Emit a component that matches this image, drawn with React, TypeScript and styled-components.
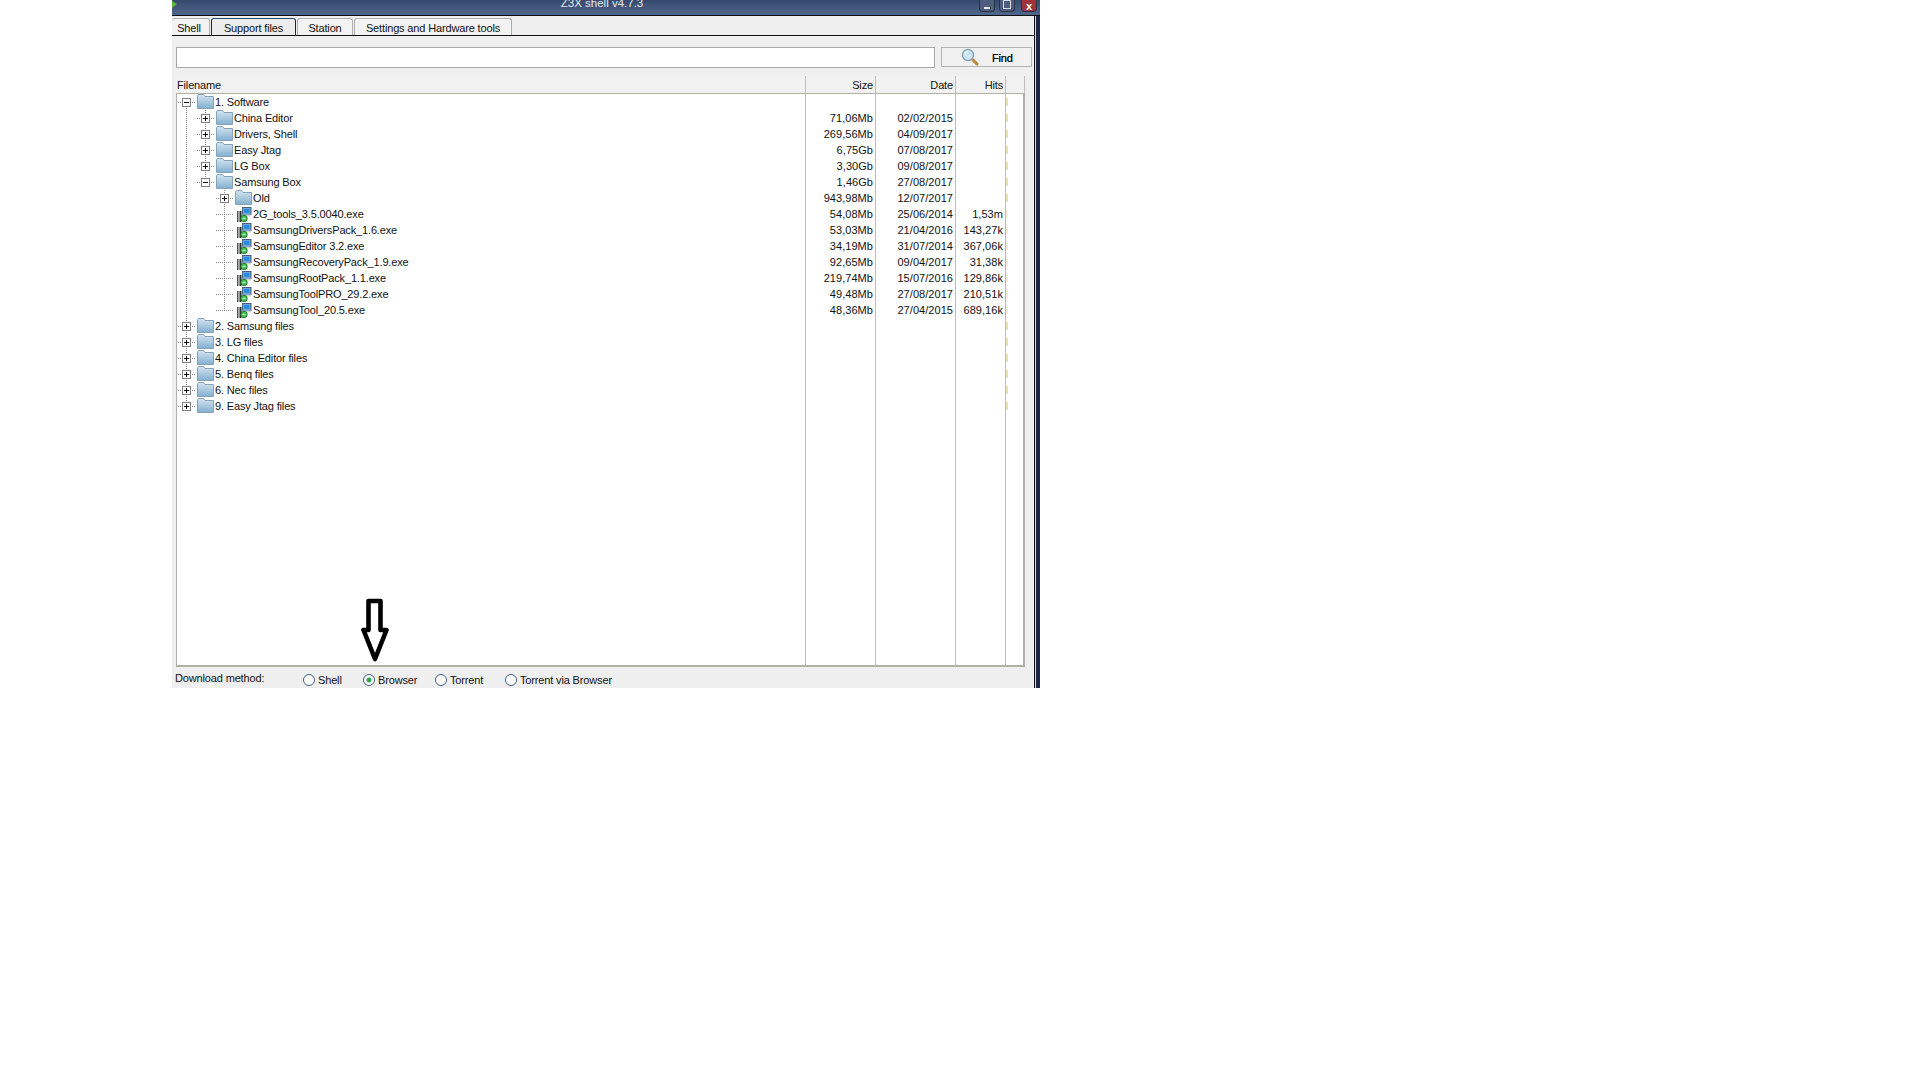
import React from "react";
import styled, { createGlobalStyle, css } from "styled-components";

type SlotKind = "none" | "line" | "tee" | "end" | "first";

interface TreeRow {
  name: string;
  kind: "open" | "closed" | "file";
  guides: SlotKind[];
  slot: SlotKind;
  size?: string;
  date?: string;
  hits?: string;
}

const rows: TreeRow[] = [
  { name: "1. Software", kind: "open", guides: [], slot: "first" },
  { name: "China Editor", kind: "closed", guides: ["line"], slot: "tee", size: "71,06Mb", date: "02/02/2015" },
  { name: "Drivers, Shell", kind: "closed", guides: ["line"], slot: "tee", size: "269,56Mb", date: "04/09/2017" },
  { name: "Easy Jtag", kind: "closed", guides: ["line"], slot: "tee", size: "6,75Gb", date: "07/08/2017" },
  { name: "LG Box", kind: "closed", guides: ["line"], slot: "tee", size: "3,30Gb", date: "09/08/2017" },
  { name: "Samsung Box", kind: "open", guides: ["line"], slot: "end", size: "1,46Gb", date: "27/08/2017" },
  { name: "Old", kind: "closed", guides: ["line", "none"], slot: "tee", size: "943,98Mb", date: "12/07/2017" },
  { name: "2G_tools_3.5.0040.exe", kind: "file", guides: ["line", "none"], slot: "tee", size: "54,08Mb", date: "25/06/2014", hits: "1,53m" },
  { name: "SamsungDriversPack_1.6.exe", kind: "file", guides: ["line", "none"], slot: "tee", size: "53,03Mb", date: "21/04/2016", hits: "143,27k" },
  { name: "SamsungEditor 3.2.exe", kind: "file", guides: ["line", "none"], slot: "tee", size: "34,19Mb", date: "31/07/2014", hits: "367,06k" },
  { name: "SamsungRecoveryPack_1.9.exe", kind: "file", guides: ["line", "none"], slot: "tee", size: "92,65Mb", date: "09/04/2017", hits: "31,38k" },
  { name: "SamsungRootPack_1.1.exe", kind: "file", guides: ["line", "none"], slot: "tee", size: "219,74Mb", date: "15/07/2016", hits: "129,86k" },
  { name: "SamsungToolPRO_29.2.exe", kind: "file", guides: ["line", "none"], slot: "tee", size: "49,48Mb", date: "27/08/2017", hits: "210,51k" },
  { name: "SamsungTool_20.5.exe", kind: "file", guides: ["line", "none"], slot: "end", size: "48,36Mb", date: "27/04/2015", hits: "689,16k" },
  { name: "2. Samsung files", kind: "closed", guides: [], slot: "tee" },
  { name: "3. LG files", kind: "closed", guides: [], slot: "tee" },
  { name: "4. China Editor files", kind: "closed", guides: [], slot: "tee" },
  { name: "5. Benq files", kind: "closed", guides: [], slot: "tee" },
  { name: "6. Nec files", kind: "closed", guides: [], slot: "tee" },
  { name: "9. Easy Jtag files", kind: "closed", guides: [], slot: "end" },
];

const methods = [
  { label: "Shell", width: 60 },
  { label: "Browser", width: 72, checked: true },
  { label: "Torrent", width: 70 },
  { label: "Torrent via Browser", width: 160 },
];

function FolderIcon() {
  return (
    <svg width="17" height="15" viewBox="0 0 17 15">
      <defs>
        <linearGradient id="folderFill" x1="0" y1="0" x2="0" y2="1">
          <stop offset="0" stopColor="#d6e5f0" />
          <stop offset="1" stopColor="#82afcf" />
        </linearGradient>
      </defs>
      <path d="M0.5 14.5V2L1.5 0.5H6.5L8 2.5H16.5V14.5Z" fill="url(#folderFill)" stroke="#86a2b8" />
    </svg>
  );
}

function FileIcon() {
  return (
    <svg width="17" height="17" viewBox="0 0 17 17">
      <rect x="7.5" y="1.5" width="8.5" height="7" fill="#6fa8d6" stroke="#44617c" />
      <rect x="9" y="3" width="5.5" height="4" fill="#2b8ce0" />
      <rect x="5" y="8.5" width="11" height="2" fill="#cfd8de" />
      <rect x="2" y="5" width="1.5" height="11" fill="#4c555c" />
      <rect x="4.5" y="5" width="2" height="11" fill="#2a2f34" />
      <circle cx="9" cy="12.5" r="3.2" fill="#46c454" stroke="#1c7a30" />
      <path d="M7.5 12.5H10.5" stroke="#d8f5da" strokeWidth="1" />
    </svg>
  );
}

function SearchIcon() {
  return (
    <svg width="18" height="18" viewBox="0 0 18 18">
      <path d="M10 10L16 16" stroke="#c08a3c" strokeWidth="3" strokeLinecap="round" />
      <circle cx="7" cy="7" r="5.5" fill="#cbe6f7" stroke="#8aa3b6" strokeWidth="1.4" />
      <path d="M4 6.5A3.4 3.4 0 0 1 7 3.6" stroke="#fff" strokeWidth="1.4" fill="none" />
    </svg>
  );
}

function CornerIcon() {
  return (
    <svg width="5" height="7" viewBox="0 0 5 7">
      <path d="M0 0L5 3L0 7Z" fill="#5cb82e" />
    </svg>
  );
}

function PointerArrow() {
  return (
    <ArrowLayer width="28" height="66" viewBox="0 0 28 66">
      <path
        d="M7.5 3H19.5V32H25.5L14 61L2.5 32H7.5Z"
        fill="#fff"
        stroke="#000"
        strokeWidth="4.6"
        strokeLinejoin="round"
      />
    </ArrowLayer>
  );
}

function Row({ row }: { row: TreeRow }) {
  return (
    <RowGrid>
      <NameCell>
        {row.guides.map((g, i) => (
          <Slot key={i} $kind={g} />
        ))}
        <Slot $kind={row.slot}>
          {row.kind !== "file" && <Expander $open={row.kind === "open"} />}
        </Slot>
        <IconBox>{row.kind === "file" ? <FileIcon /> : <FolderIcon />}</IconBox>
        <Label>{row.name}</Label>
      </NameCell>
      <ValueCell>{row.size}</ValueCell>
      <ValueCell>{row.date}</ValueCell>
      <ValueCell>{row.hits}</ValueCell>
      <BarCell>
        <HitBar $faint={Boolean(row.hits)} />
      </BarCell>
    </RowGrid>
  );
}

export default function App() {
  return (
    <>
      <GlobalStyle />
      <Window>
        <TitleBar>
          <TitleIcon>
            <CornerIcon />
          </TitleIcon>
          <Title>Z3X shell v4.7.3</Title>
          <WindowButtons>
            <WindowButton>
              <MinGlyph />
            </WindowButton>
            <WindowButton>
              <MaxGlyph />
            </WindowButton>
            <CloseButton>x</CloseButton>
          </WindowButtons>
        </TitleBar>
        <Body>
          <Content>
            <Tabs>
              <Tab $width={38} $first>Shell</Tab>
              <Tab $width={85} $active>Support files</Tab>
              <Tab $width={56}>Station</Tab>
              <Tab $width={158}>Settings and Hardware tools</Tab>
            </Tabs>
            <Panel>
              <SearchRow>
                <SearchInput />
                <FindButton>
                  <SearchIcon />
                  <span>Find</span>
                </FindButton>
              </SearchRow>
              <Table>
                <HeaderGrid>
                  <HeaderCell $left>Filename</HeaderCell>
                  <HeaderCell>Size</HeaderCell>
                  <HeaderCell>Date</HeaderCell>
                  <HeaderCell>Hits</HeaderCell>
                  <HeaderEnd />
                </HeaderGrid>
                <TreeBox>
                  {rows.map((row) => (
                    <Row key={row.name} row={row} />
                  ))}
                  <FillerGrid>
                    <ValueCell />
                    <ValueCell />
                    <ValueCell />
                    <ValueCell />
                    <BarCell />
                  </FillerGrid>
                </TreeBox>
              </Table>
              <Footer>
                <FooterLabel>Download method:</FooterLabel>
                {methods.map((m) => (
                  <RadioItem key={m.label} $width={m.width}>
                    <Radio $checked={m.checked} />
                    {m.label}
                  </RadioItem>
                ))}
              </Footer>
              <PointerArrow />
            </Panel>
          </Content>
          <WindowEdge />
        </Body>
      </Window>
    </>
  );
}

const GlobalStyle = createGlobalStyle`
  html, body {
    margin: 0;
    padding: 0;
    background: #fff;
  }
  body {
    font-family: "Liberation Sans", Arial, sans-serif;
    font-size: 11px;
    letter-spacing: -0.15px;
    color: #111;
  }
`;

const Window = styled.div`
  width: 868px;
  height: 688px;
  margin-left: 172px;
  display: flex;
  flex-direction: column;
`;

const TitleBar = styled.div`
  height: 15px;
  flex: none;
  display: grid;
  grid-template-columns: 1fr auto 1fr;
  padding-right: 8px;
  overflow: hidden;
  background: linear-gradient(#34496d, #50668a);
  border-bottom: 1px solid #0c0f16;
`;

const TitleIcon = styled.div`
  line-height: 0;
  padding-top: 1px;
`;

const Title = styled.div`
  margin-top: -4px;
  font-size: 11.5px;
  line-height: 15px;
  letter-spacing: 0;
  color: #e4e9f0;
`;

const WindowButtons = styled.div`
  display: flex;
  justify-content: flex-end;
  gap: 4px;
  margin-right: -5px;
`;

const WindowButton = styled.div`
  width: 16px;
  height: 12px;
  box-sizing: border-box;
  display: flex;
  align-items: center;
  justify-content: center;
  background: #4d5f7c;
  border: 1px solid #2a3344;
  border-top: none;
  border-radius: 0 0 4px 4px;
`;

const CloseButton = styled(WindowButton)`
  margin-left: 2px;
  background: #a2313f;
  color: #fff;
  font-weight: bold;
  font-size: 11px;
  line-height: 10px;
`;

const MinGlyph = styled.span`
  width: 6px;
  height: 2px;
  margin-top: 4px;
  background: #e8ebf0;
`;

const MaxGlyph = styled.span`
  width: 8px;
  height: 9px;
  box-sizing: border-box;
  border: 1px solid #d8dde6;
  margin-top: -2px;
`;

const Body = styled.div`
  flex: 1;
  display: flex;
  min-height: 0;
`;

const Content = styled.div`
  width: 862px;
  display: flex;
  flex-direction: column;
  background: #efefef;
`;

const WindowEdge = styled.div`
  width: 6px;
  background: linear-gradient(90deg, #111 0 1px, #d8d8d8 1px 2px, #1c2946 2px);
`;

const Tabs = styled.div`
  height: 19px;
  flex: none;
  display: flex;
  align-items: flex-end;
  gap: 1px;
  border-bottom: 1px solid #111;
`;

const Tab = styled.div<{ $width: number; $active?: boolean; $first?: boolean }>`
  width: ${(p) => p.$width}px;
  height: 17px;
  box-sizing: border-box;
  display: flex;
  align-items: center;
  justify-content: center;
  padding-top: 1px;
  border: 1px solid #adadad;
  border-bottom: none;
  border-radius: 3px 3px 0 0;
  background: #f3f3f3;
  ${(p) =>
    p.$first &&
    css`
      border-left: none;
      padding-right: 3px;
    `}
  ${(p) =>
    p.$active &&
    css`
      border-color: #222;
      border-top-color: #2d4a70;
      background: #ececec;
    `}
`;

const Panel = styled.div`
  position: relative;
  flex: 1;
  padding: 11px 0 0 4px;
  display: flex;
  flex-direction: column;
`;

const SearchRow = styled.div`
  display: flex;
  gap: 6px;
  height: 21px;
  flex: none;
`;

const SearchInput = styled.div`
  width: 759px;
  box-sizing: border-box;
  background: #fff;
  border: 1px solid #a8a8a8;
`;

const FindButton = styled.div`
  width: 91px;
  height: 20px;
  box-sizing: border-box;
  display: flex;
  align-items: center;
  gap: 13px;
  padding: 1px 0 0 19px;
  border: 1px solid #b4b4b4;
  background: #f1f1f1;
  text-shadow: 0 0 0.6px #222;

  svg {
    margin-top: -1px;
  }
`;

const Table = styled.div`
  width: 849px;
  margin-top: 8px;
  flex: none;
  display: flex;
  flex-direction: column;
`;

const columns = "629px 70px 80px 50px 1fr";

const HeaderGrid = styled.div`
  height: 17px;
  display: grid;
  grid-template-columns: ${columns};
  padding-left: 1px;
  background: #f2f2f2;
`;

const HeaderCell = styled.div<{ $left?: boolean }>`
  display: flex;
  align-items: center;
  justify-content: ${(p) => (p.$left ? "flex-start" : "flex-end")};
  padding: 0 2px 0 0;
  border-right: 1px solid #bdbdbd;
`;

const HeaderEnd = styled.div`
  border-right: 1px solid #bdbdbd;
`;

const TreeBox = styled.div`
  height: 574px;
  box-sizing: border-box;
  display: flex;
  flex-direction: column;
  background: #fff;
  border: 1px solid #b0b0a8;
  border-width: 1px 2px 2px 1px;
`;

const RowGrid = styled.div`
  height: 16px;
  flex: none;
  display: grid;
  grid-template-columns: ${columns};
`;

const FillerGrid = styled(RowGrid)`
  flex: 1;
`;

const NameCell = styled.div`
  display: flex;
  align-items: center;
  border-right: 1px solid #bdbdbd;
  overflow: hidden;
`;

const ValueCell = styled.div`
  display: flex;
  align-items: center;
  justify-content: flex-end;
  padding-right: 2px;
  letter-spacing: 0.05px;
  border-right: 1px solid #bdbdbd;
`;

const BarCell = styled.div`
  display: flex;
  align-items: center;
`;

const HitBar = styled.span<{ $faint?: boolean }>`
  width: 2px;
  height: 8px;
  background: ${(p) => (p.$faint ? "#f8f0dc" : "#f3deb0")};
`;

const dotsV = "linear-gradient(#8a8a8a 50%, transparent 50%)";
const dotsH = "linear-gradient(90deg, #8a8a8a 50%, transparent 50%)";
const mask = "linear-gradient(#fff, #fff)";

const slotStyles: Record<SlotKind, string> = {
  none: "",
  line: `background: ${dotsV} 9px 0 / 1px 2px repeat-y;`,
  tee: `background: ${dotsV} 9px 0 / 1px 2px repeat-y, ${dotsH} 9px 8px / 2px 1px repeat-x;`,
  end: `background: ${mask} 9px 9px / 1px 7px no-repeat, ${dotsV} 9px 0 / 1px 2px repeat-y, ${dotsH} 9px 8px / 2px 1px repeat-x;`,
  first: `background: ${mask} 9px 0 / 1px 8px no-repeat, ${dotsV} 9px 0 / 1px 2px repeat-y, ${dotsH} 9px 8px / 2px 1px repeat-x;`,
};

const Slot = styled.div<{ $kind: SlotKind }>`
  width: 19px;
  height: 16px;
  flex: none;
  display: flex;
  align-items: center;
  padding-left: 5px;
  box-sizing: border-box;
  ${(p) => slotStyles[p.$kind]}
`;

const Expander = styled.span<{ $open: boolean }>`
  width: 9px;
  height: 9px;
  box-sizing: border-box;
  border: 1px solid #808080;
  background-color: #fff;
  background-image: linear-gradient(#111, #111)
    ${(p) => (p.$open ? "" : ", linear-gradient(#111, #111)")};
  background-size: 5px 1px ${(p) => (p.$open ? "" : ", 1px 5px")};
  background-position: center;
  background-repeat: no-repeat;
`;

const IconBox = styled.span`
  width: 18px;
  height: 16px;
  flex: none;
  display: flex;
  align-items: flex-start;
  padding-left: 1px;
  box-sizing: border-box;

  svg {
    display: block;
  }
`;

const Label = styled.span`
  white-space: nowrap;
  padding-left: 1px;
`;

const Footer = styled.div`
  flex: 1;
  display: flex;
  align-items: center;
  margin-left: -1px;
  padding-top: 4px;
`;

const FooterLabel = styled.div`
  width: 128px;
  margin-top: -4px;
`;

const RadioItem = styled.div<{ $width: number }>`
  width: ${(p) => p.$width}px;
  display: flex;
  align-items: center;
  gap: 3px;
`;

const Radio = styled.span<{ $checked?: boolean }>`
  width: 12px;
  height: 12px;
  box-sizing: border-box;
  flex: none;
  border: 1px solid #3f5f86;
  border-radius: 50%;
  background: ${(p) =>
    p.$checked
      ? "radial-gradient(circle, #2fa84a 0 2px, #fff 3px)"
      : "#fff"};
`;

const ArrowLayer = styled.svg`
  position: absolute;
  left: 189px;
  top: 562px;
`;
